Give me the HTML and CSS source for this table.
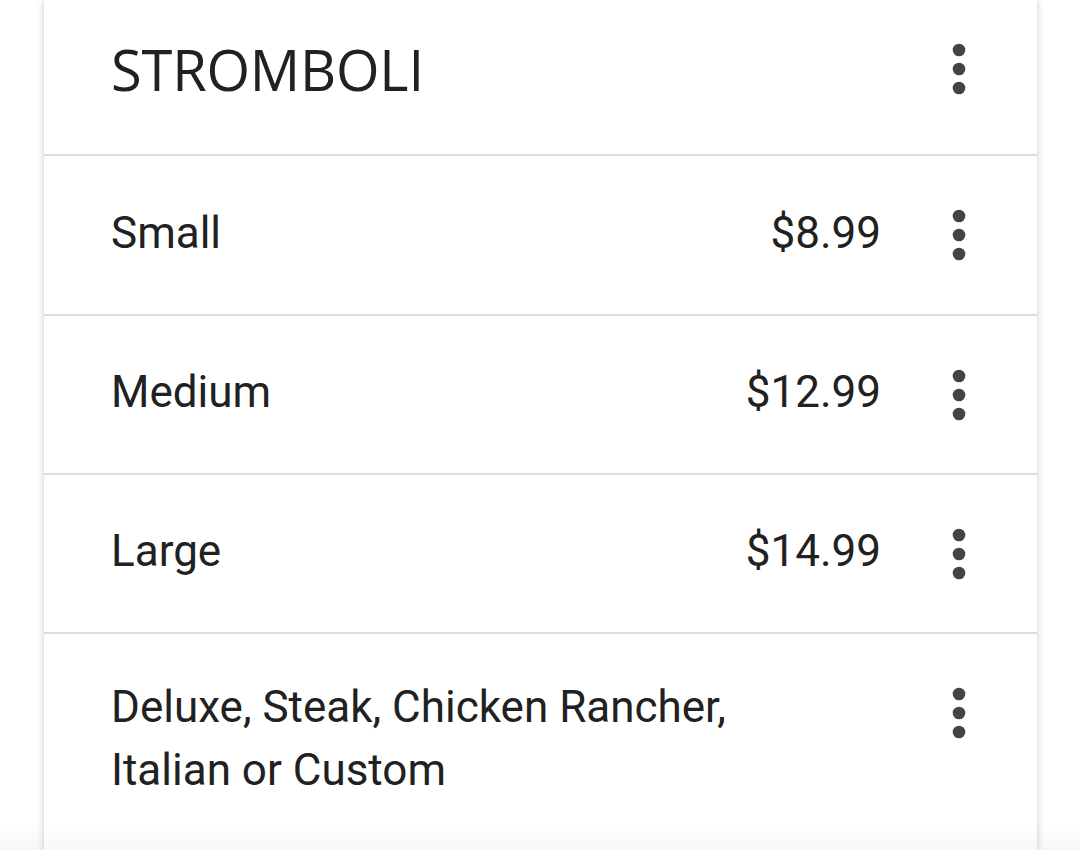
FILE: index.html
```html
<!DOCTYPE html>
<html>
<head>
<meta charset="utf-8">
<link rel="stylesheet" href="styles.css">
</head>
<body>
<div class="card">
  <div class="header">
    <h1 class="title">STROMBOLI</h1>
    <div class="more"><svg width="14" height="52" viewBox="0 0 14 52"><circle cx="7" cy="7" r="6.3"/><circle cx="7" cy="26" r="6.3"/><circle cx="7" cy="45" r="6.3"/></svg></div>
  </div>
  <div class="row row-first">
    <span class="name">Small</span>
    <span class="price">$8.99</span>
    <div class="more"><svg width="14" height="52" viewBox="0 0 14 52"><circle cx="7" cy="7" r="6.3"/><circle cx="7" cy="26" r="6.3"/><circle cx="7" cy="45" r="6.3"/></svg></div>
  </div>
  <div class="row">
    <span class="name">Medium</span>
    <span class="price">$12.99</span>
    <div class="more"><svg width="14" height="52" viewBox="0 0 14 52"><circle cx="7" cy="7" r="6.3"/><circle cx="7" cy="26" r="6.3"/><circle cx="7" cy="45" r="6.3"/></svg></div>
  </div>
  <div class="row">
    <span class="name">Large</span>
    <span class="price">$14.99</span>
    <div class="more"><svg width="14" height="52" viewBox="0 0 14 52"><circle cx="7" cy="7" r="6.3"/><circle cx="7" cy="26" r="6.3"/><circle cx="7" cy="45" r="6.3"/></svg></div>
  </div>
  <div class="row row-multi">
    <span class="name">Deluxe, Steak, Chicken Rancher,<br>Italian or Custom</span>
    <div class="more"><svg width="14" height="52" viewBox="0 0 14 52"><circle cx="7" cy="7" r="6.3"/><circle cx="7" cy="26" r="6.3"/><circle cx="7" cy="45" r="6.3"/></svg></div>
  </div>
</div>
</body>
</html>
```
FILE: styles.css
```css
html, body {
  margin: 0;
  padding: 0;
  overflow: hidden;
}
body {
  width: 1080px;
  height: 850px;
  background: linear-gradient(to bottom, #ffffff 0, #ffffff 825px, #f6f6f6 850px);
  font-family: Roboto, "Liberation Sans", sans-serif;
  color: #212121;
}
.card {
  margin-left: 44px;
  width: 993px;
  height: 850px;
  background: linear-gradient(to bottom, #ffffff 0, #ffffff 825px, #f8f8f8 850px);
  box-shadow: 0 0 8px rgba(0,0,0,0.18), 0 2px 3px rgba(0,0,0,0.06);
}
.header {
  height: 156px;
  display: flex;
  align-items: center;
  padding: 0 71px 16px 67px;
  box-sizing: border-box;
  border-bottom: 2px solid #dedee0;
}
.title {
  margin: 0;
  flex: 1;
  font-family: "Open Sans", Lato, sans-serif;
  font-weight: 400;
  font-size: 56px;
  letter-spacing: -0.2px;
  color: #202124;
  line-height: 1;
}
.row {
  height: 159px;
  display: flex;
  align-items: center;
  padding: 0 71px 0 67px;
  box-sizing: border-box;
  border-bottom: 2px solid #dedee0;
  font-size: 44px;
  line-height: 63px;
}
.row-first {
  height: 160px;
}
.name {
  flex: 1;
  padding-bottom: 4px;
}
.price {
  margin-right: 71px;
  padding-bottom: 4px;
}
.more {
  width: 14px;
  height: 52px;
  display: flex;
}
.more svg {
  fill: #444444;
}
.row-multi {
  height: auto;
  align-items: flex-start;
  padding-top: 42px;
  border-bottom: none;
}
.row-multi .name {
  padding-bottom: 0;
}
.row-multi .more {
  margin-top: 11px;
}
```
